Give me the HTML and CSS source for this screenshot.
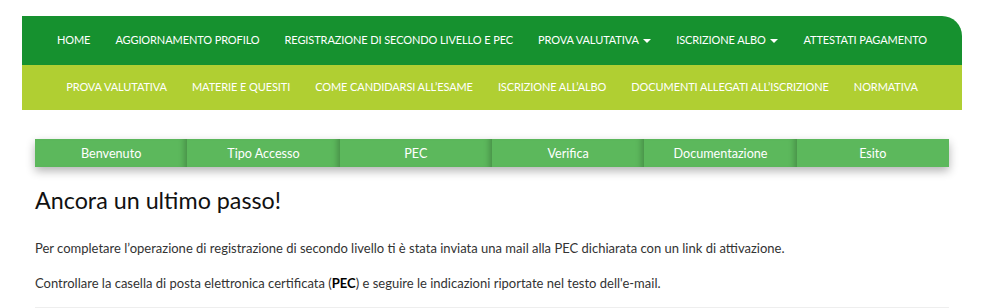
FILE: index.html
```html
<!DOCTYPE html>
<html lang="it">
<head>
<meta charset="utf-8">
<title>Registrazione</title>
<link rel="stylesheet" href="styles.css">
</head>
<body>
<div class="page">
  <nav class="nav-main">
    <a href="#">HOME</a>
    <a href="#">AGGIORNAMENTO PROFILO</a>
    <a href="#">REGISTRAZIONE DI SECONDO LIVELLO E PEC</a>
    <a href="#">PROVA VALUTATIVA <span class="caret"></span></a>
    <a href="#">ISCRIZIONE ALBO <span class="caret"></span></a>
    <a href="#">ATTESTATI PAGAMENTO</a>
  </nav>
  <nav class="nav-sub">
    <a href="#">PROVA VALUTATIVA</a>
    <a href="#">MATERIE E QUESITI</a>
    <a href="#">COME CANDIDARSI ALL’ESAME</a>
    <a href="#">ISCRIZIONE ALL’ALBO</a>
    <a href="#">DOCUMENTI ALLEGATI ALL’ISCRIZIONE</a>
    <a href="#">NORMATIVA</a>
  </nav>
  <main class="content">
    <ol class="steps">
      <li>Benvenuto</li>
      <li>Tipo Accesso</li>
      <li>PEC</li>
      <li>Verifica</li>
      <li>Documentazione</li>
      <li>Esito</li>
    </ol>
    <h1 class="title">Ancora un ultimo passo!</h1>
    <p class="text">Per completare l’operazione di registrazione di secondo livello ti è stata inviata una mail alla PEC dichiarata con un link di attivazione.</p>
    <p class="text">Controllare la casella di posta elettronica certificata (<strong>PEC</strong>) e seguire le indicazioni riportate nel testo dell'e-mail.</p>
    <div class="divider"></div>
  </main>
</div>
</body>
</html>
```
FILE: styles.css
```css
html, body {
  margin: 0;
  padding: 0;
  background: #fff;
}
body {
  font-family: "Lato", "Open Sans", sans-serif;
  color: #222;
}
.page {
  width: 940px;
  margin: 16px 0 0 22px;
}
.nav-main {
  box-sizing: border-box;
  background: #16912f;
  height: 49px;
  padding-bottom: 2px;
  border-top-right-radius: 20px;
  display: flex;
  justify-content: center;
  align-items: center;
}
.nav-main a,
.nav-sub a {
  color: #fff;
  text-decoration: none;
  font-size: 11px;
  letter-spacing: -0.1px;
  padding: 0 12.5px;
  white-space: nowrap;
}
.caret {
  display: inline-block;
  width: 0;
  height: 0;
  border-left: 4px solid transparent;
  border-right: 4px solid transparent;
  border-top: 4px solid #fff;
  vertical-align: middle;
  margin-left: 2px;
}
.nav-sub {
  box-sizing: border-box;
  background: #b0cf32;
  height: 45px;
  padding-bottom: 2px;
  display: flex;
  justify-content: center;
  align-items: center;
}
.content {
  padding: 29px 13px 0;
}
.steps {
  list-style: none;
  margin: 0;
  padding: 0;
  display: grid;
  grid-template-columns: repeat(6, 1fr);
  height: 28px;
  box-shadow: 0 4px 10px rgba(0, 0, 0, 0.3);
}
.steps li {
  background: #5cb85c;
  color: #fff;
  font-size: 12.6px;
  display: flex;
  align-items: center;
  justify-content: center;
  box-shadow: inset -7px 0 6px -5px rgba(0, 0, 0, 0.25);
}
.steps li:last-child {
  box-shadow: none;
}
.title {
  font-size: 23.3px;
  font-weight: 400;
  color: #111;
  margin: 20px 0 0;
  line-height: 26px;
}
.text {
  font-size: 13px;
  line-height: 18px;
  margin: 26px 0 0;
  color: #333;
}
.text + .text {
  margin-top: 17px;
}
.text strong {
  font-weight: 700;
  color: #000;
}
.divider {
  margin-top: 15px;
  border-top: 1px solid #eee;
}
```
